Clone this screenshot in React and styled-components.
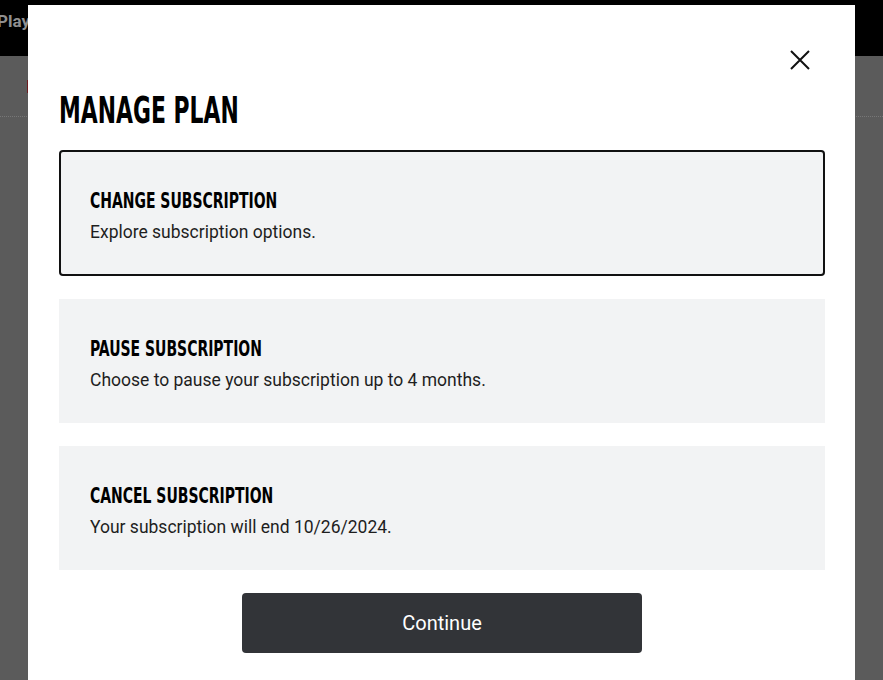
import React from 'react';
import styled, { createGlobalStyle } from 'styled-components';

const GlobalStyle = createGlobalStyle`
  * { box-sizing: border-box; }
  html, body { margin: 0; padding: 0; }
  body {
    font-family: Roboto, "Liberation Sans", Arial, sans-serif;
    background: #5b5b5b;
    overflow: hidden;
  }
`;

// page behind the dialog, already dimmed by the backdrop
const Page = styled.div`
  height: 680px;
  background: #5b5b5b;
`;

const TopBar = styled.div`
  height: 56px;
  background: #000;
  display: flex;
  align-items: center;
  padding-bottom: 14px;
`;

const TopBarLabel = styled.span`
  color: #8f8f8f;
  font-weight: 700;
  font-size: 17px;
  margin-left: -3px;
`;

const NavBar = styled.div`
  height: 61px;
  border-bottom: 1px dotted #777;
  display: flex;
  align-items: center;
  padding-left: 27px;
`;

const NavMark = styled.span`
  width: 3px;
  height: 13px;
  background: #6e1b1f;
`;

const Dialog = styled.div`
  position: fixed;
  top: 5px;
  left: 28px;
  width: 827px;
  height: 700px;
  background: #fff;
  padding: 43px 30px 0 31px;
  display: flex;
  flex-direction: column;
`;

const CloseRow = styled.div`
  display: flex;
  justify-content: flex-end;
`;

const CloseButton = styled.button`
  width: 24px;
  height: 24px;
  margin-right: 13px;
  padding: 0;
  border: 0;
  background: none;
  display: flex;
  align-items: center;
  justify-content: center;
  cursor: pointer;
`;

const Title = styled.h2`
  margin: 17px 0 19px;
  font-family: "DejaVu Sans Condensed", "DejaVu Sans", sans-serif;
  font-stretch: condensed;
  font-weight: 700;
  font-size: 38px;
  line-height: 42px;
  color: #000;
  transform: scaleX(0.64);
  transform-origin: left center;
  white-space: nowrap;
`;

const Options = styled.div`
  display: flex;
  flex-direction: column;
  gap: 23px;
`;

const Option = styled.div`
  height: ${p => (p.selected ? '126px' : '124px')};
  background: #f2f3f4;
  border-radius: ${p => (p.selected ? '4px' : '0')};
  box-shadow: ${p => (p.selected ? 'inset 0 0 0 2px #111' : 'none')};
  padding: ${p => (p.selected ? '39px' : '38px')} 31px 0;
  cursor: pointer;
`;

const OptionTitle = styled.h3`
  margin: 0 0 6px;
  font-family: "DejaVu Sans Condensed", "DejaVu Sans", sans-serif;
  font-stretch: condensed;
  font-weight: 700;
  font-size: 21px;
  line-height: 25px;
  color: #000;
  transform: scaleX(0.74);
  transform-origin: left center;
  white-space: nowrap;
`;

const OptionText = styled.p`
  margin: 0;
  font-size: 17.5px;
  line-height: 24px;
  color: #1e1e1e;
`;

const ContinueButton = styled.button`
  align-self: center;
  margin-top: 23px;
  width: 400px;
  height: 60px;
  border: 0;
  border-radius: 4px;
  background: #323438;
  color: #fff;
  font-family: Roboto, "Liberation Sans", sans-serif;
  font-size: 20px;
  cursor: pointer;
`;

const options = [
  { id: 'change', title: 'CHANGE SUBSCRIPTION', text: 'Explore subscription options.' },
  { id: 'pause', title: 'PAUSE SUBSCRIPTION', text: 'Choose to pause your subscription up to 4 months.' },
  { id: 'cancel', title: 'CANCEL SUBSCRIPTION', text: 'Your subscription will end 10/26/2024.' },
];

export default function App() {
  const [selected, setSelected] = React.useState('change');

  return (
    <>
      <GlobalStyle />
      <Page>
        <TopBar>
          <TopBarLabel>Playlists</TopBarLabel>
        </TopBar>
        <NavBar>
          <NavMark />
        </NavBar>
      </Page>

      <Dialog role="dialog" aria-label="Manage plan">
        <CloseRow>
          <CloseButton aria-label="Close">
            <svg width="22" height="22" viewBox="0 0 22 22" fill="none" stroke="#111" strokeWidth="2">
              <path d="M2 2 L20 20 M20 2 L2 20" />
            </svg>
          </CloseButton>
        </CloseRow>
        <Title>MANAGE PLAN</Title>
        <Options>
          {options.map(o => (
            <Option key={o.id} selected={selected === o.id} onClick={() => setSelected(o.id)}>
              <OptionTitle>{o.title}</OptionTitle>
              <OptionText>{o.text}</OptionText>
            </Option>
          ))}
        </Options>
        <ContinueButton>Continue</ContinueButton>
      </Dialog>
    </>
  );
}
